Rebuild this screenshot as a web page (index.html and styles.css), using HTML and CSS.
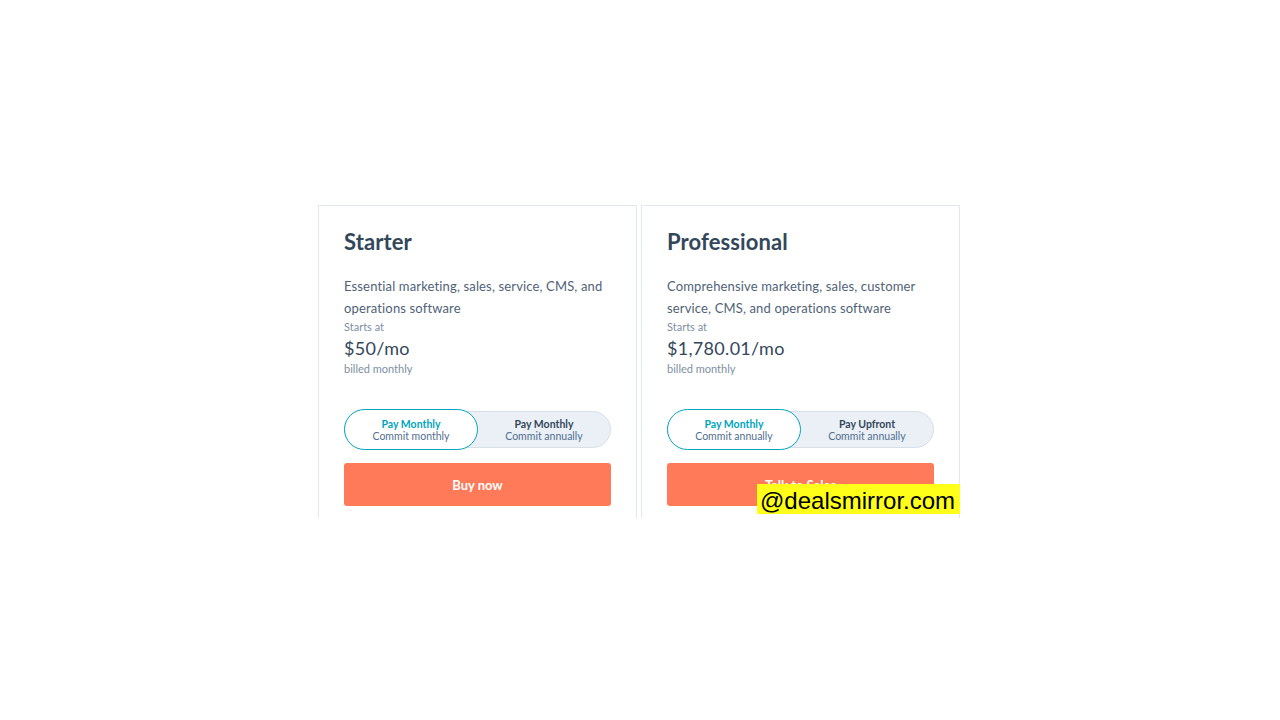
FILE: index.html
```html
<!DOCTYPE html>
<html>
<head>
<meta charset="utf-8">
<link rel="stylesheet" href="styles.css">
</head>
<body>
<div class="stage">
  <div class="cards">
    <div class="card">
      <h2 class="title">Starter</h2>
      <p class="desc">Essential marketing, sales, service, CMS, and operations software</p>
      <div class="starts">Starts at</div>
      <div class="price">$50/mo</div>
      <div class="billed">billed monthly</div>
      <div class="toggle">
        <div class="opt active"><span class="opt-h">Pay Monthly</span><span class="opt-s">Commit monthly</span></div>
        <div class="opt"><span class="opt-h">Pay Monthly</span><span class="opt-s">Commit annually</span></div>
      </div>
      <button class="cta">Buy now</button>
    </div>
    <div class="card">
      <h2 class="title">Professional</h2>
      <p class="desc">Comprehensive marketing, sales, customer service, CMS, and operations software</p>
      <div class="starts">Starts at</div>
      <div class="price">$1,780.01/mo</div>
      <div class="billed">billed monthly</div>
      <div class="toggle">
        <div class="opt active"><span class="opt-h">Pay Monthly</span><span class="opt-s">Commit annually</span></div>
        <div class="opt"><span class="opt-h">Pay Upfront</span><span class="opt-s">Commit annually</span></div>
      </div>
      <button class="cta">Talk to Sales</button>
      <div class="watermark">@dealsmirror.com</div>
    </div>
  </div>
</div>
</body>
</html>
```
FILE: styles.css
```css
html, body {
  margin: 0;
  padding: 0;
  background: #ffffff;
}
body {
  font-family: Lato, "Noto Sans", sans-serif;
  color: #33475b;
}
.stage {
  padding-top: 205px;
  height: 720px;
  box-sizing: border-box;
}
.cards {
  margin-left: 318px;
  width: 643px;
  height: 313px;
  overflow: hidden;
  display: flex;
  gap: 4px;
}
.card {
  position: relative;
  width: 319px;
  flex: none;
  box-sizing: border-box;
  border: 1px solid #e3e8ee;
  border-bottom: none;
  padding: 24px 25px 0 25px;
  height: 330px;
}
.title {
  margin: 0;
  font-size: 22px;
  line-height: 24px;
  font-weight: 700;
  color: #33475b;
  letter-spacing: 0.1px;
}
.desc {
  margin: 21px 0 0 0;
  font-size: 13px;
  line-height: 22px;
  color: #4f6278;
  letter-spacing: 0.15px;
}
.starts {
  margin-top: 0;
  font-size: 11px;
  line-height: 15px;
  color: #7c8fa3;
}
.price {
  margin-top: 3px;
  font-size: 18px;
  line-height: 22px;
  color: #33475b;
  letter-spacing: 0.3px;
}
.billed {
  margin-top: 2px;
  font-size: 11px;
  line-height: 15px;
  color: #7c8fa3;
}
.toggle {
  margin-top: 35px;
  display: flex;
  height: 37px;
  width: 267px;
  box-sizing: border-box;
  background: #eaf0f6;
  border: 1px solid #d6dfe8;
  border-radius: 20px;
  align-items: center;
}
.opt {
  flex: 1;
  display: flex;
  flex-direction: column;
  align-items: center;
  justify-content: center;
  height: 100%;
  font-size: 10.5px;
  line-height: 12px;
}
.opt.active {
  flex: none;
  width: 134px;
  height: 41px;
  margin-left: -1px;
  background: #ffffff;
  border: 1px solid #00a4bd;
  border-radius: 21px;
  box-sizing: border-box;
}
.opt-h {
  font-weight: 700;
  color: #33475b;
}
.opt.active .opt-h {
  color: #00a4bd;
}
.opt-s {
  color: #516f90;
}
.cta {
  display: block;
  margin-top: 15px;
  width: 267px;
  height: 43px;
  border: none;
  border-radius: 3px;
  background: #ff7a59;
  color: #ffffff;
  font-family: Lato, "Noto Sans", sans-serif;
  font-size: 13px;
  font-weight: 700;
  padding: 0;
}
.watermark {
  position: absolute;
  left: 115px;
  top: 278px;
  width: 203px;
  height: 30px;
  background: #ffff1a;
  color: #000000;
  font-family: "Liberation Sans", Arial, sans-serif;
  font-size: 24px;
  line-height: 33px;
  padding-left: 3px;
  box-sizing: border-box;
  white-space: nowrap;
}
```
